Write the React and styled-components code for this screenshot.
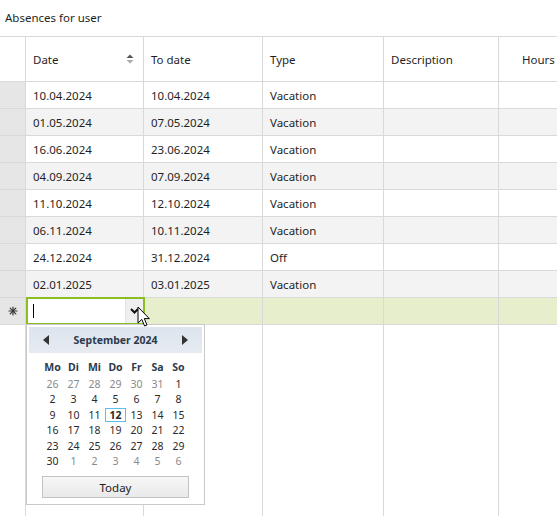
import React from "react";
import styled, { createGlobalStyle } from "styled-components";

const Global = createGlobalStyle`
  html, body { margin: 0; padding: 0; background: #fff; }
  body {
    font-family: "Segoe UI", "Noto Sans", "Open Sans", sans-serif;
    font-size: 11.5px;
    color: #1f1f1f;
  }
`;

const LINE = "#d9d9d9";

const Page = styled.div`
  position: relative;
  width: 557px;
  height: 516px;
  overflow: hidden;
  background: #fff;
`;

const Title = styled.div`
  height: 36px;
  box-sizing: border-box;
  display: flex;
  align-items: center;
  padding: 0 0 2px 5px;
`;

const Grid = styled.div`
  display: grid;
  grid-template-columns: 26px 118px 119px 121px 115px 70px;
  grid-template-rows: 45px repeat(9, 27px) 200px;
  border-top: 1px solid ${LINE};
  width: max-content;
`;

const Cell = styled.div`
  box-sizing: border-box;
  border-right: 1px solid ${LINE};
  border-bottom: ${(p) => (p.$open ? "none" : `1px solid ${LINE}`)};
  padding-left: ${(p) => p.$pad ?? 7}px;
  display: flex;
  align-items: center;
  justify-content: ${(p) => (p.$center ? "center" : "flex-start")};
  white-space: nowrap;
  overflow: hidden;
  background: ${(p) => p.$bg || "#fff"};
`;

const HeaderCell = styled(Cell)`
  justify-content: space-between;
  padding-right: 9px;
`;

const SortIcon = styled.svg`
  width: 8px;
  height: 10px;
  flex: none;
`;

const Editor = styled.div`
  box-sizing: border-box;
  margin: -1px -1px 0 0;
  border: 2px solid #8cbd24;
  background: #fff;
  display: flex;
  align-items: stretch;
  position: relative;
  z-index: 1;
`;

const Caret = styled.div`
  width: 1px;
  height: 14px;
  background: #000;
  align-self: center;
  margin-left: 5px;
  flex: none;
`;

const Spacer = styled.div`
  flex: 1;
`;

const DropButton = styled.div`
  width: 17px;
  background: #efefef;
  border-left: 1px solid #e2e2e2;
  display: flex;
  align-items: center;
  justify-content: center;
`;

const Popup = styled.div`
  position: absolute;
  left: 26px;
  top: 324px;
  width: 179px;
  height: 181px;
  box-sizing: border-box;
  border: 1px solid #c9c9c9;
  background: #fff;
  padding: 2px;
  display: flex;
  flex-direction: column;
  align-items: center;
  z-index: 2;
`;

const CalHeader = styled.div`
  align-self: stretch;
  height: 26px;
  background: linear-gradient(#dce4ed, #e6ebf1);
  display: flex;
  align-items: center;
  justify-content: space-between;
  padding: 0 14px;
  font-weight: bold;
  font-size: 10.5px;
  color: #2d3a4c;
`;

const Arrow = styled.svg`
  width: 7px;
  height: 10px;
`;

const DaysGrid = styled.div`
  display: grid;
  grid-template-columns: repeat(7, 21px);
  grid-template-rows: 19px;
  grid-auto-rows: 15.5px;
  margin-top: 4px;
  font-size: 10.5px;
`;

const DayName = styled.div`
  display: flex;
  align-items: center;
  justify-content: center;
  font-weight: bold;
  color: #2d3a4c;
`;

const Day = styled.div`
  display: flex;
  align-items: center;
  justify-content: center;
  color: ${(p) => (p.$other ? "#8a8a8a" : "#2a2a2a")};
  font-weight: ${(p) => (p.$today ? "bold" : "normal")};
  box-sizing: border-box;
  border: ${(p) => (p.$today ? "1px solid #5cbfe9" : "1px solid transparent")};
  margin: ${(p) => (p.$today ? "1px 0 0" : "0")};
  height: ${(p) => (p.$today ? "14px" : "auto")};
`;

const TodayButton = styled.div`
  margin-top: 7px;
  width: 147px;
  height: 22px;
  box-sizing: border-box;
  border: 1px solid #c3c3c3;
  background: linear-gradient(#f7f7f7, #e9e9e9);
  display: flex;
  align-items: center;
  justify-content: center;
  color: #222;
  font-size: 11.5px;
`;

const Cursor = styled.svg`
  position: absolute;
  left: 137px;
  top: 306px;
  width: 14px;
  height: 22px;
  z-index: 3;
`;

const rows = [
  ["10.04.2024", "10.04.2024", "Vacation"],
  ["01.05.2024", "07.05.2024", "Vacation"],
  ["16.06.2024", "23.06.2024", "Vacation"],
  ["04.09.2024", "07.09.2024", "Vacation"],
  ["11.10.2024", "12.10.2024", "Vacation"],
  ["06.11.2024", "10.11.2024", "Vacation"],
  ["24.12.2024", "31.12.2024", "Off"],
  ["02.01.2025", "03.01.2025", "Vacation"],
];

const dayNames = ["Mo", "Di", "Mi", "Do", "Fr", "Sa", "So"];
const days = [
  ...[26, 27, 28, 29, 30, 31].map((d) => ({ d, other: true })),
  ...Array.from({ length: 30 }, (_, i) => ({ d: i + 1, other: false })),
  ...[1, 2, 3, 4, 5, 6].map((d) => ({ d, other: true })),
];

function Asterisk() {
  return (
    <svg width="10" height="10" viewBox="0 0 10 10">
      <g stroke="#333" strokeWidth="1.2" strokeLinecap="round">
        <line x1="5" y1="1" x2="5" y2="9" />
        <line x1="1" y1="5" x2="9" y2="5" />
        <line x1="2.2" y1="2.2" x2="7.8" y2="7.8" />
        <line x1="7.8" y1="2.2" x2="2.2" y2="7.8" />
      </g>
    </svg>
  );
}

export default function App() {
  return (
    <>
      <Global />
      <Page>
        <Title>Absences for user</Title>
        <Grid>
          <Cell />
          <HeaderCell>
            Date
            <SortIcon viewBox="0 0 8 10">
              <path d="M0.5 4 L4 0.5 L7.5 4 Z" fill="#555" />
              <path d="M0.5 6 L4 9.5 L7.5 6 Z" fill="#aaa" />
            </SortIcon>
          </HeaderCell>
          <Cell>To date</Cell>
          <Cell>Type</Cell>
          <Cell>Description</Cell>
          <Cell $pad={23}>Hours</Cell>

          {rows.map((r, i) => {
            const bg = i % 2 === 1 ? "#f3f3f3" : "#fff";
            return (
              <React.Fragment key={i}>
                <Cell $bg="#e6e6e6" />
                <Cell $bg={bg}>{r[0]}</Cell>
                <Cell $bg={bg}>{r[1]}</Cell>
                <Cell $bg={bg}>{r[2]}</Cell>
                <Cell $bg={bg} />
                <Cell $bg={bg} />
              </React.Fragment>
            );
          })}

          <Cell $bg="#e6e6e6" $pad={0} $center>
            <Asterisk />
          </Cell>
          <Editor>
            <Caret />
            <Spacer />
            <DropButton>
              <svg width="9" height="6" viewBox="0 0 9 6">
                <path d="M1 1 L4.5 4.5 L8 1" fill="none" stroke="#111" strokeWidth="2" />
              </svg>
            </DropButton>
          </Editor>
          <Cell $bg="#e6eecb" />
          <Cell $bg="#e6eecb" />
          <Cell $bg="#e6eecb" />
          <Cell $bg="#e6eecb" />

          <Cell $open />
          <Cell $open />
          <Cell $open />
          <Cell $open />
          <Cell $open />
          <Cell $open />
        </Grid>

        <Cursor viewBox="0 0 14 22">
          <path
            d="M1 1 L1 17 L4.8 13.4 L7.6 20 L10 19 L7.3 12.6 L12.3 12.6 Z"
            fill="#fff"
            stroke="#000"
            strokeWidth="1"
            strokeLinejoin="round"
          />
        </Cursor>

        <Popup>
          <CalHeader>
            <Arrow viewBox="0 0 7 10">
              <path d="M6 0 L0 5 L6 10 Z" fill="#333" />
            </Arrow>
            September 2024
            <Arrow viewBox="0 0 7 10">
              <path d="M1 0 L7 5 L1 10 Z" fill="#333" />
            </Arrow>
          </CalHeader>
          <DaysGrid>
            {dayNames.map((n) => (
              <DayName key={n}>{n}</DayName>
            ))}
            {days.map((x, i) => (
              <Day key={i} $other={x.other} $today={!x.other && x.d === 12}>
                {x.d}
              </Day>
            ))}
          </DaysGrid>
          <TodayButton>Today</TodayButton>
        </Popup>
      </Page>
    </>
  );
}
